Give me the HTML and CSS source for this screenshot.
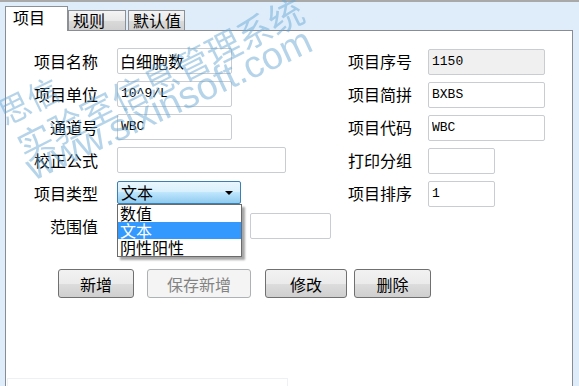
FILE: index.html
```html
<!DOCTYPE html>
<html lang="zh-CN">
<head>
<meta charset="UTF-8" />
<title>项目设置</title>
<link rel="stylesheet" href="styles.css">
</head>
<body>
<div class="tabs">
  <div class="tab active">项目</div>
  <div class="tab">规则</div>
  <div class="tab tab-last">默认值</div>
</div>

<div class="panel">
  <div class="form">
    <div class="label">项目名称</div>
    <div class="cell"><input class="field cjk w115" value="白细胞数"></div>
    <div class="label-r">项目序号</div>
    <div class="cell-r"><input class="field w117" value="1150" disabled></div>

    <div class="label">项目单位</div>
    <div class="cell"><input class="field w115" value="10^9/L"></div>
    <div class="label-r">项目简拼</div>
    <div class="cell-r"><input class="field w117" value="BXBS"></div>

    <div class="label">通道号</div>
    <div class="cell"><input class="field w115" value="WBC"></div>
    <div class="label-r">项目代码</div>
    <div class="cell-r"><input class="field w117" value="WBC"></div>

    <div class="label">校正公式</div>
    <div class="cell"><input class="field w169" value=""></div>
    <div class="label-r">打印分组</div>
    <div class="cell-r"><input class="field w67" value=""></div>

    <div class="label">项目类型</div>
    <div class="cell">
      <div class="select">
        文本
        <div class="options">
          <div class="option">数值</div>
          <div class="option selected">文本</div>
          <div class="option">阴性阳性</div>
        </div>
      </div>
    </div>
    <div class="label-r">项目排序</div>
    <div class="cell-r"><input class="field w67" value="1"></div>

    <div class="label">范围值</div>
    <div class="cell"><input class="field w125" value=""><input class="field w81" value=""></div>
    <div></div>
    <div></div>
  </div>

  <div class="actions">
    <button class="btn b-add">新增</button>
    <button class="btn b-save" disabled>保存新增</button>
    <button class="btn b-edit">修改</button>
    <button class="btn b-del">删除</button>
  </div>

  <div class="status"></div>
</div>

<!-- 水印 -->
<div class="watermark">
  <span class="wm wm-name">思信</span>
  <span class="wm wm-title">实验室信息管理系统</span>
  <span class="wm wm-url">www.sixinsoft.com</span>
  <span class="wm wm-next">信</span>
</div>
</body>
</html>
```

FILE: styles.css
```css
* {
  box-sizing: border-box;
}
html, body {
  margin: 0;
  height: 100%;
}
body {
  background: #dfedfb;
  border-top: 2px solid #a9a9a9;
  font-family: "Noto Sans CJK SC", sans-serif;
  font-size: 16px;
  color: #000;
  overflow: hidden;
}

/* tabs */
.tabs {
  display: flex;
  align-items: flex-end;
  height: 24px;
  margin-top: 4px;
  padding-left: 5px;
  position: relative;
  z-index: 1;
}
.tab {
  width: 58px;
  height: 20px;
  padding-left: 4px;
  line-height: 18px;
  border: 1px solid #8d8f96;
  border-bottom: none;
  background: linear-gradient(#f4f4f4, #e9e9e9 50%, #dadada 51%, #d0d0d0);
}
.tab-last {
  width: 57px;
  margin-left: 2px;
}
.tab.active {
  width: 63px;
  height: 25px;
  margin-bottom: -1px;
  padding-left: 7px;
  line-height: 21px;
  background: #fff;
}

/* panel */
.panel {
  width: 568px;
  height: 356px;
  margin-left: 5px;
  border: 1px solid #898c95;
  border-bottom: none;
  background: #fff;
  padding: 13px 0 0 0;
}
.form {
  display: grid;
  grid-template-columns: 92px 250px 64px 1fr;
  grid-auto-rows: 33px;
  align-items: center;
}
.label {
  text-align: right;
  white-space: nowrap;
}
.label-r {
  white-space: nowrap;
}
.cell {
  display: flex;
  align-items: center;
  gap: 8px;
  padding-left: 19px;
}
.cell-r {
  padding-left: 16px;
}

.field {
  height: 26px;
  padding: 0 3px;
  border: 1px solid #c9ccd1;
  border-radius: 2px;
  background: #fff;
  color: #000;
  font-family: "Liberation Mono", "Noto Sans CJK SC", monospace;
  font-size: 13px;
  outline: none;
}
.field.cjk {
  padding: 0 2px;
  font-family: "Noto Sans CJK SC", sans-serif;
  font-size: 16px;
}
.field:disabled {
  background: #f0f0f0;
  color: #000;
  -webkit-text-fill-color: #000;
}
.w115 { width: 115px; }
.w117 { width: 117px; }
.w169 { width: 169px; }
.w67 { width: 67px; }
.w125 { width: 125px; }
.w81 { width: 81px; }

/* combo box */
.select {
  position: relative;
  width: 124px;
  height: 23px;
  padding-left: 3px;
  line-height: 20px;
  border: 1px solid #3c7fb1;
  border-radius: 2px;
  background: linear-gradient(#eaf6fd, #d9f0fc 45%, #bee6fd 50%, #8fcbee);
}
.select::after {
  content: "";
  position: absolute;
  right: 7px;
  top: 9px;
  border-left: 4px solid transparent;
  border-right: 4px solid transparent;
  border-top: 4px solid #000;
}
.options {
  position: absolute;
  top: 22px;
  left: -1px;
  width: 125px;
  border: 1px solid #6b6b6b;
  background: #fff;
  box-shadow: 3px 3px 2px rgba(0,0,0,0.35);
  z-index: 5;
}
.option {
  height: 17px;
  line-height: 16px;
  padding-left: 2px;
}
.option.selected {
  background: #3399ff;
  color: #fff;
}

/* buttons */
.actions {
  display: flex;
  margin-top: 27px;
  padding-left: 52px;
}
.btn {
  height: 29px;
  padding: 0;
  border: 1px solid #707070;
  border-radius: 3px;
  background: linear-gradient(#f2f2f2, #ebebeb 50%, #dddddd 51%, #cfcfcf);
  font-family: "Noto Sans CJK SC", sans-serif;
  font-size: 16px;
  color: #000;
}
.btn:disabled {
  border-color: #adb2b5;
  background: #f4f4f4;
  color: #838383;
}
.b-add { width: 76px; }
.b-save { width: 104px; margin-left: 13px; }
.b-edit { width: 82px; margin-left: 14px; }
.b-del { width: 77px; margin-left: 7px; }

.status {
  width: 281px;
  height: 8px;
  margin: 80px 0 0 1px;
  border: 1px solid #eef1f4;
  border-bottom: none;
}

/* watermark */
.watermark {
  position: fixed;
  top: 0;
  left: 0;
  width: 100%;
  height: 100%;
  overflow: hidden;
  pointer-events: none;
  z-index: 10;
  color: rgba(100,165,210,0.48);
}
.wm {
  position: absolute;
  transform-origin: 0 0;
  white-space: nowrap;
  line-height: 1;
}
.wm-name {
  left: -8px;
  top: 99px;
  font-size: 32px;
  transform: rotate(-26deg);
}
.wm-title {
  left: 11px;
  top: 132px;
  font-size: 35px;
  transform: rotate(-26.7deg);
}
.wm-url {
  left: 20px;
  top: 152px;
  font-family: "Liberation Sans", sans-serif;
  font-size: 38px;
  transform: rotate(-25deg);
}
.wm-next {
  left: 250px;
  top: 392px;
  font-size: 32px;
  transform: rotate(-26deg);
}
```
